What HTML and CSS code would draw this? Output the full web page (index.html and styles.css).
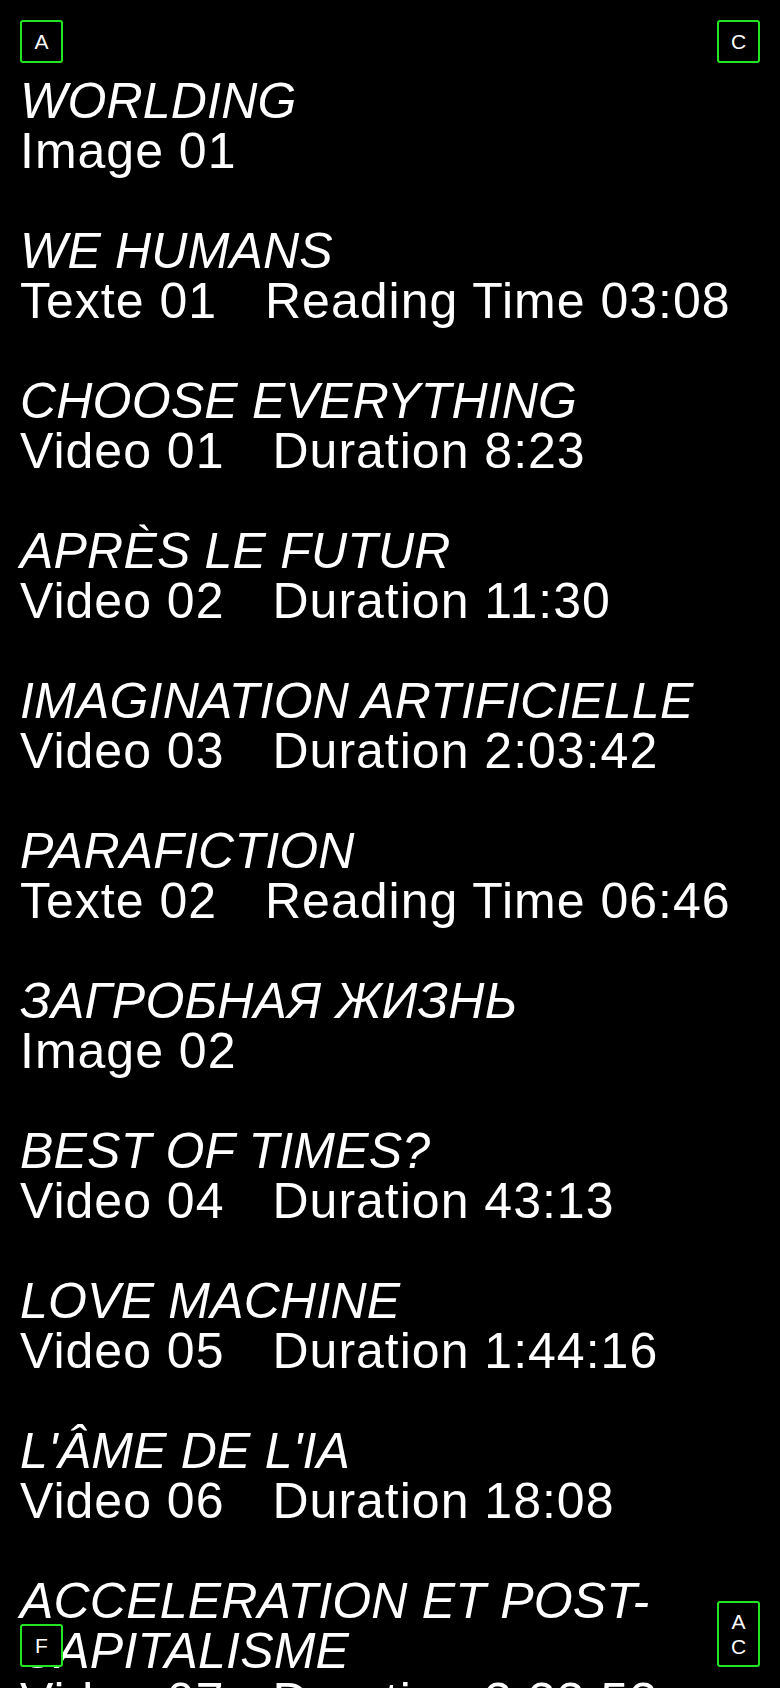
FILE: index.html
```html
<!DOCTYPE html>
<html lang="fr">
<head>
<meta charset="utf-8">
<title>Worlding</title>
<link rel="stylesheet" href="styles.css">
</head>
<body>
<a class="tag tag-tl" href="#">A</a>
<a class="tag tag-tr" href="#">C</a>
<a class="tag tag-bl" href="#">F</a>
<a class="tag tag-br tag-tall" href="#"><span>A</span><span>C</span></a>

<main class="list">
  <div class="item"><div class="title">WORLDING</div><div class="meta"><span>Image 01</span></div></div>
  <div class="item"><div class="title">WE HUMANS</div><div class="meta"><span>Texte 01</span><span class="info">Reading Time 03:08</span></div></div>
  <div class="item"><div class="title">CHOOSE EVERYTHING</div><div class="meta"><span>Video 01</span><span class="info">Duration 8:23</span></div></div>
  <div class="item"><div class="title">APRÈS LE FUTUR</div><div class="meta"><span>Video 02</span><span class="info">Duration 11:30</span></div></div>
  <div class="item"><div class="title">IMAGINATION ARTIFICIELLE</div><div class="meta"><span>Video 03</span><span class="info">Duration 2:03:42</span></div></div>
  <div class="item"><div class="title">PARAFICTION</div><div class="meta"><span>Texte 02</span><span class="info">Reading Time 06:46</span></div></div>
  <div class="item"><div class="title">ЗАГРОБНАЯ ЖИЗНЬ</div><div class="meta"><span>Image 02</span></div></div>
  <div class="item"><div class="title">BEST OF TIMES?</div><div class="meta"><span>Video 04</span><span class="info">Duration 43:13</span></div></div>
  <div class="item"><div class="title">LOVE MACHINE</div><div class="meta"><span>Video 05</span><span class="info">Duration 1:44:16</span></div></div>
  <div class="item"><div class="title">L'ÂME DE L'IA</div><div class="meta"><span>Video 06</span><span class="info">Duration 18:08</span></div></div>
  <div class="item"><div class="title">ACCELERATION ET POST-CAPITALISME</div><div class="meta"><span>Video 07</span><span class="info">Duration 3:33:53</span></div></div>
</main>
</body>
</html>
```

FILE: styles.css
```css
html, body {
  margin: 0;
  padding: 0;
  background: #000;
}

body {
  color: #fff;
  font-family: "Liberation Sans", Arial, sans-serif;
}

.list {
  padding: 76px 20px 40px 20px;
  display: flex;
  flex-direction: column;
  gap: 50px;
}

.item {
  font-size: 50px;
  line-height: 50px;
}

.title {
  font-style: italic;
  letter-spacing: 0.2px;
}

.meta {
  white-space: nowrap;
  letter-spacing: 1px;
}

.info {
  margin-left: 48px;
}

.tag {
  position: fixed;
  box-sizing: border-box;
  width: 43px;
  height: 43px;
  border: 2px solid #24e524;
  border-radius: 3px;
  background: #000;
  color: #fff;
  text-decoration: none;
  font-family: "Liberation Sans", Arial, sans-serif;
  font-size: 21px;
  line-height: 25px;
  display: flex;
  flex-direction: column;
  align-items: center;
  justify-content: center;
  z-index: 10;
}

.tag-tl { top: 20px; left: 20px; }
.tag-tr { top: 20px; right: 20px; }
.tag-bl { bottom: 21px; left: 20px; }
.tag-br { bottom: 21px; right: 20px; }

.tag-tall {
  height: 66px;
}
```
